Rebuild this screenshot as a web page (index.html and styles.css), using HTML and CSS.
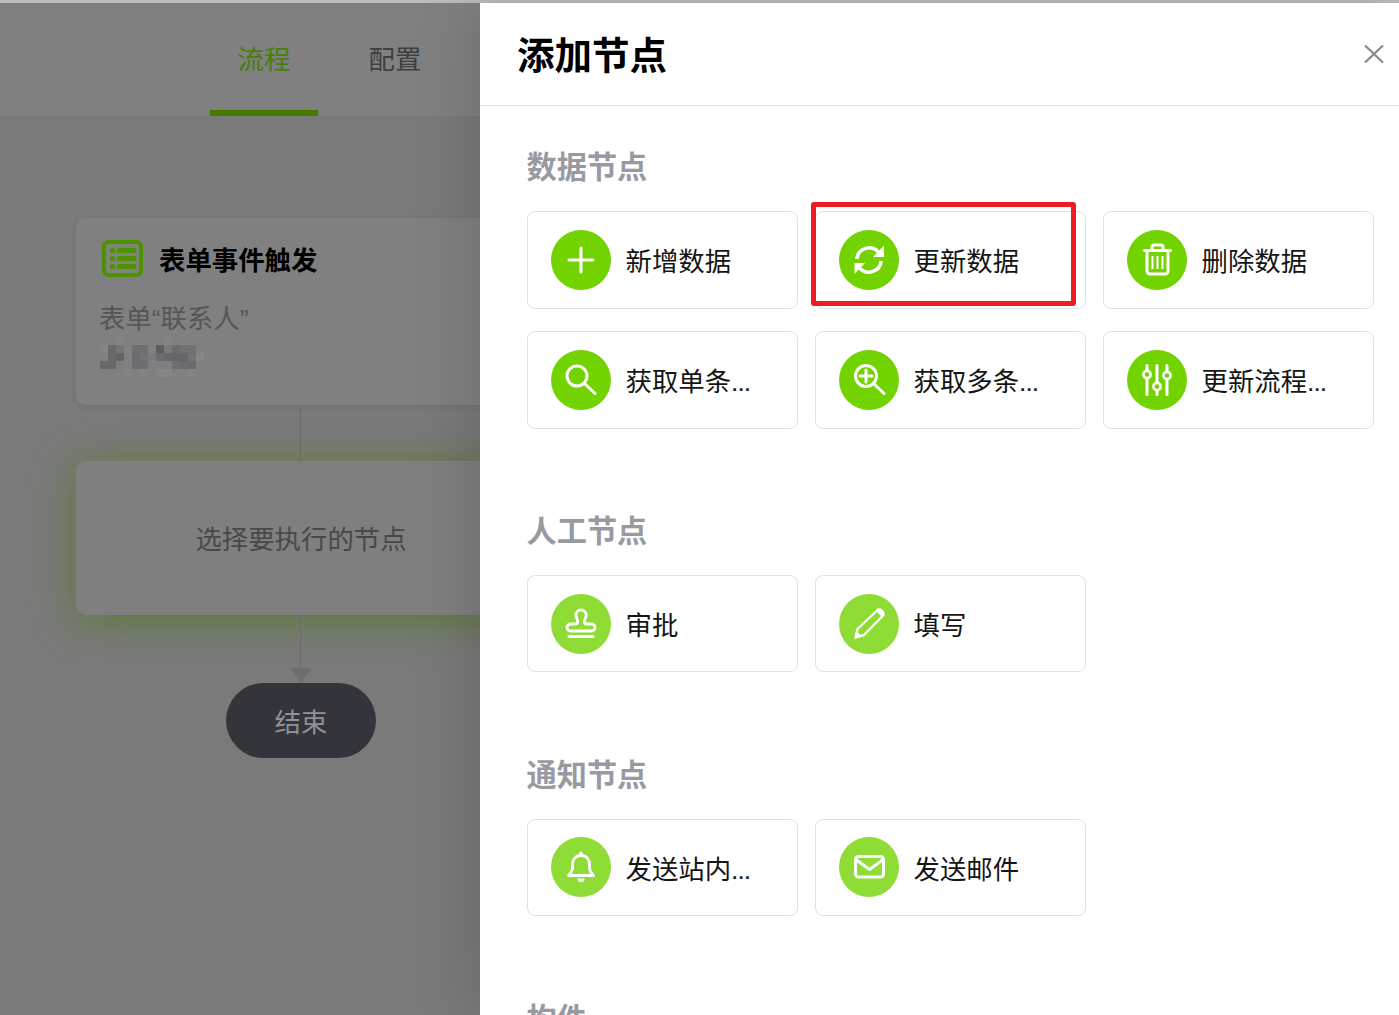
FILE: index.html
```html
<!DOCTYPE html>
<html lang="zh-CN">
<head>
<meta charset="utf-8">
<title>添加节点</title>
<link rel="stylesheet" href="styles.css">
</head>
<body>
<div class="topline"></div>
<div class="app">
  <div class="flow-side">
    <nav class="tabs">
      <div class="tab tab-active">流程</div>
      <div class="tab">配置</div>
    </nav>
    <div class="canvas">
      <div class="node-trigger">
        <div class="trigger-head">
          <svg class="trigger-icon" viewBox="0 0 41 37" width="41" height="37">
            <rect x="2" y="2" width="37" height="33" rx="4" fill="#7d8574" stroke="#4f9000" stroke-width="4"/>
            <g fill="#4f9000"><circle cx="10.5" cy="10.5" r="2.6"/><circle cx="10.5" cy="18.5" r="2.6"/><circle cx="10.5" cy="26.5" r="2.6"/></g>
            <g stroke="#4f9000" stroke-width="5" stroke-linecap="round"><path d="M17 10.5H32"/><path d="M17 18.5H32"/><path d="M17 26.5H32"/></g>
          </svg>
          <span class="trigger-title">表单事件触发</span>
        </div>
        <div class="trigger-sub">表单“联系人”</div>
        <svg class="mosaic" viewBox="0 0 112 40" width="112" height="40" shape-rendering="crispEdges">
          <rect x="16" y="0" width="8" height="8" fill="#858383"/><rect x="64" y="0" width="8" height="8" fill="#848486"/>
          <rect x="0" y="8" width="8" height="8" fill="#888484"/><rect x="8" y="8" width="8" height="8" fill="#68686a"/><rect x="16" y="8" width="8" height="8" fill="#767676"/><rect x="32" y="8" width="16" height="8" fill="#6e6e72"/><rect x="56" y="8" width="8" height="8" fill="#5e5e60"/><rect x="64" y="8" width="8" height="8" fill="#7a7a7a"/><rect x="72" y="8" width="8" height="8" fill="#6a6a70"/><rect x="80" y="8" width="16" height="8" fill="#707075"/>
          <rect x="0" y="16" width="8" height="8" fill="#828080"/><rect x="8" y="16" width="8" height="8" fill="#6a6a6c"/><rect x="16" y="16" width="8" height="8" fill="#656568"/><rect x="32" y="16" width="8" height="8" fill="#6c6c70"/><rect x="40" y="16" width="8" height="8" fill="#747272"/><rect x="48" y="16" width="8" height="8" fill="#7a7a7f"/><rect x="56" y="16" width="8" height="8" fill="#6c6c70"/><rect x="64" y="16" width="24" height="8" fill="#65676c"/><rect x="88" y="16" width="8" height="8" fill="#727277"/><rect x="96" y="16" width="8" height="8" fill="#848888"/>
          <rect x="0" y="24" width="16" height="8" fill="#686869"/><rect x="16" y="24" width="8" height="8" fill="#7e7e7e"/><rect x="32" y="24" width="16" height="8" fill="#6e6e72"/><rect x="48" y="24" width="16" height="8" fill="#7e7e84"/><rect x="64" y="24" width="8" height="8" fill="#827c7c"/><rect x="72" y="24" width="8" height="8" fill="#6e6e72"/><rect x="80" y="24" width="16" height="8" fill="#6c6c70"/>
          <rect x="24" y="32" width="8" height="8" fill="#848484"/><rect x="40" y="32" width="8" height="8" fill="#848484"/><rect x="56" y="32" width="16" height="8" fill="#86868a"/><rect x="88" y="32" width="8" height="8" fill="#848484"/>
        </svg>
      </div>
      <div class="wire wire-short"></div>
      <div class="node-pick">选择要执行的节点</div>
      <div class="wire wire-long"></div>
      <div class="arrow"></div>
      <div class="node-end">结束</div>
    </div>
  </div>

  <aside class="drawer">
    <header class="drawer-head">
      <h1 class="drawer-title">添加节点</h1>
      <svg class="close" viewBox="0 0 20 18" width="20" height="18"><path d="M1 0.5L19 17.5M19 0.5L1 17.5" fill="none" stroke="#888a90" stroke-width="2.2"/></svg>
    </header>
    <div class="drawer-body">
      <section class="group group-data">
        <h2 class="group-title">数据节点</h2>
        <div class="grid">
          <div class="item">
            <svg class="ico ico-data" viewBox="0 0 60 60"><circle cx="30" cy="30" r="30"/><path class="s" d="M18 30H42M30 18V42"/></svg>
            <span class="label">新增数据</span>
          </div>
          <div class="item">
            <svg class="ico ico-data" viewBox="0 0 60 60"><circle cx="30" cy="30" r="30"/><path class="s arc" d="M17.800 29A12.500 12.500 0 0 1 39 21.500"/><path fill="#fff" d="M45 15.500V27H34z"/><path class="s arc" d="M42.200 31A12.500 12.500 0 0 1 21 38.500"/><path fill="#fff" d="M15.500 44V33H26z"/></svg>
            <span class="label">更新数据</span>
            <div class="highlight"></div>
          </div>
          <div class="item">
            <svg class="ico ico-data" viewBox="0 0 60 60"><circle cx="30" cy="30" r="30"/><path class="s" d="M17.500 20.500H43.500M25 20V17a2 2 0 0 1 2-2h7a2 2 0 0 1 2 2v3M20 21V41a3 3 0 0 0 3 3H38a3 3 0 0 0 3-3V21"/><path class="s thin" d="M25.500 26V39M30.500 26V39M35.500 26V39"/></svg>
            <span class="label">删除数据</span>
          </div>
          <div class="item">
            <svg class="ico ico-data" viewBox="0 0 60 60"><circle cx="30" cy="30" r="30"/><circle class="s" cx="26" cy="26" r="10"/><path class="s" d="M33.500 33.500L44 43.500"/></svg>
            <span class="label">获取单条<span class="dots">...</span></span>
          </div>
          <div class="item">
            <svg class="ico ico-data" viewBox="0 0 60 60"><circle cx="30" cy="30" r="30"/><circle class="s" cx="27" cy="26" r="10.500"/><path class="s" d="M34.500 33.500L45 43.500M21 26H33M27 20V32"/></svg>
            <span class="label">获取多条<span class="dots">...</span></span>
          </div>
          <div class="item">
            <svg class="ico ico-data" viewBox="0 0 60 60"><circle cx="30" cy="30" r="30"/><path class="s" d="M20 15.500V44.500M30 15.500V44.500M40 15.500V44.500"/><circle class="k" cx="20" cy="24.500" r="3.600"/><circle class="k" cx="30" cy="36.500" r="3.600"/><circle class="k" cx="40" cy="25.500" r="3.600"/></svg>
            <span class="label">更新流程<span class="dots">...</span></span>
          </div>
        </div>
      </section>

      <section class="group group-manual">
        <h2 class="group-title">人工节点</h2>
        <div class="grid grid-tight">
          <div class="item">
            <svg class="ico ico-soft" viewBox="0 0 60 60"><circle cx="30" cy="30" r="30"/><path class="s mid" d="M30 16a5.200 5.200 0 0 0-5.200 5.200c0 3 2 4 2 6 0 1.800-1 2.800-3 2.800h-4.300a3.500 3.500 0 0 0 0 7h21a3.500 3.500 0 0 0 0-7h-4.300c-2 0-3-1-3-2.800 0-2 2-3 2-6A5.200 5.200 0 0 0 30 16z"/><path class="s" d="M18 42.500H42"/></svg>
            <span class="label">审批</span>
          </div>
          <div class="item">
            <svg class="ico ico-soft" viewBox="0 0 60 60"><circle cx="30" cy="30" r="30"/><path class="s pen" d="M16.500 43.500L18.500 35 39 15.500 44.500 21 25 41z"/><path fill="#fff" d="M37 17L39.500 14.500H42L45.500 18V20.500L43 23zM15.500 44.500L17.500 37 23 42.500z"/></svg>
            <span class="label">填写</span>
          </div>
        </div>
      </section>

      <section class="group group-notify">
        <h2 class="group-title">通知节点</h2>
        <div class="grid grid-tight">
          <div class="item">
            <svg class="ico ico-soft" viewBox="0 0 60 60"><circle cx="30" cy="30" r="30"/><path class="s mid" d="M30 18.500c-5.500 0-8.500 4-8.500 9v3.500c0 3-1.800 5-4 7.500h25c-2.200-2.500-4-4.500-4-7.500v-3.500c0-5-3-9-8.500-9z"/><circle fill="#fff" cx="30" cy="16.500" r="2"/><path fill="#fff" d="M26.500 41.500a3.500 3.500 0 0 0 7 0z"/></svg>
            <span class="label">发送站内<span class="dots">...</span></span>
          </div>
          <div class="item">
            <svg class="ico ico-soft" viewBox="0 0 60 60"><circle cx="30" cy="30" r="30"/><rect class="s" x="16.500" y="19.500" width="28" height="20.500" rx="3"/><path class="s" d="M17.500 23L30.500 32.500L43.500 23"/></svg>
            <span class="label">发送邮件</span>
          </div>
        </div>
      </section>

      <section class="group">
        <h2 class="group-title">构件</h2>
      </section>
    </div>
  </aside>
</div>
</body>
</html>
```
FILE: styles.css
```css
* { box-sizing: border-box; }
html, body { margin: 0; padding: 0; height: 100%; overflow: hidden; }
body {
  font-family: "Liberation Sans", "Noto Sans CJK SC", sans-serif;
  background: #fff;
}
.topline { height: 3px; background: #bcbcbc; }
.app { display: flex; height: 1012px; }

/* left, dimmed flow editor */
.flow-side { width: 480px; flex: none; overflow: hidden; background: #7a7a7a; }
.tabs { display: flex; height: 113px; padding-left: 210px; gap: 23px; background: #808080; }
.tab {
  width: 108px; height: 113px; text-align: center;
  font-size: 26.4px; line-height: 115px; color: #3e3f42;
}
.tab-active { color: #477f08; border-bottom: 6px solid #437a00; }

.canvas { display: flex; flex-direction: column; align-items: center; width: 450px; margin: 102px 0 0 76px; }
.node-trigger {
  width: 450px; height: 187px; flex: none;
  padding: 22px 23px 0;
  background: #808080; border-radius: 10px;
  box-shadow: 0 2px 8px rgba(0, 0, 0, .07);
}
.trigger-head { display: flex; align-items: flex-start; height: 40px; padding-left: 3px; }
.trigger-icon { flex: none; }
.trigger-title { margin-left: 16px; font-size: 26.400px; line-height: 42px; font-weight: 700; color: #000; }
.trigger-sub { margin-top: 21px; font-size: 26.400px; line-height: 37px; color: #565657; }
.mosaic { display: block; margin: -1px 0 0 1px; }

.wire { width: 1px; flex: none; margin-right: 1px; background: #6b6b6b; }
.wire-short { height: 56px; }
.wire-long { height: 53.5px; }
.arrow {
  flex: none; width: 0; height: 0;
  border-left: 11px solid transparent; border-right: 11px solid transparent;
  border-top: 15px solid #6e6e6e;
}
.node-pick {
  width: 450px; height: 153.5px; flex: none;
  display: flex; align-items: center; justify-content: center;
  background: #7f7f7f; border-radius: 10px;
  box-shadow: 0 5px 40px #5b7a35;
  font-size: 26.4px; color: #48484a;
}
.node-end {
  width: 150px; height: 75px; flex: none;
  display: flex; align-items: center; justify-content: center;
  background: #33353a; border-radius: 38px;
  font-size: 26.4px; color: #909296;
}

/* right drawer */
.drawer {
  position: relative;
  flex: 1; min-width: 0; background: #fff;
  box-shadow: -8px 0 60px rgba(0, 0, 0, .14);
}
.drawer-head {
  display: flex; align-items: center; justify-content: space-between;
  height: 103px; padding: 0 15px 0 38px;
  border-bottom: 1px solid #e2e2e6;
}
.drawer-title { margin: 3px 0 0 -1px; font-size: 37.500px; line-height: 50px; font-weight: 700; color: #000; }
.close { flex: none; }
.drawer-body { padding: 40px 0 0 47px; }
.group { margin-bottom: 81px; }
.group-manual { margin-bottom: 81.6px; }
.group-notify { margin-bottom: 82.4px; }
.group-title { margin: 0 0 22px -0.500px; font-size: 30.200px; line-height: 43px; font-weight: 700; color: #999aa1; }
.grid { display: grid; grid-template-columns: repeat(3, 271px); column-gap: 17px; row-gap: 22px; }
.item {
  position: relative;
  display: flex; align-items: center; gap: 15px;
  height: 98px; padding-left: 23px;
  border: 1px solid #e0e0e8; border-radius: 8px; background: #fff;
}
.grid-tight .item { height: 97px; }
.label { margin-left: -0.500px; font-size: 26.400px; color: #151515; white-space: nowrap; }
.group-data .label { margin-bottom: 2px; }
.dots { letter-spacing: -1px; }
.ico { width: 60px; height: 60px; flex: none; }
.ico-data circle:first-child { fill: #72d300; }
.ico-soft circle:first-child { fill: #8edc35; }
.ico .s { fill: none; stroke: #fff; stroke-width: 3; stroke-linecap: round; stroke-linejoin: round; }
.ico .s.thin { stroke-width: 2; stroke-linecap: butt; }
.ico .s.mid { stroke-width: 2.800; }
.ico .s.pen { stroke-width: 2.400; }
.ico .s.arc { stroke-width: 3.600; stroke-linecap: butt; }
.ico .k { fill: #72d300; stroke: #fff; stroke-width: 2.600; }
.highlight {
  position: absolute; left: -5px; top: -10px;
  width: 265px; height: 104px;
  border: 5px solid #ee1c25; border-radius: 3px;
  pointer-events: none;
}
```
